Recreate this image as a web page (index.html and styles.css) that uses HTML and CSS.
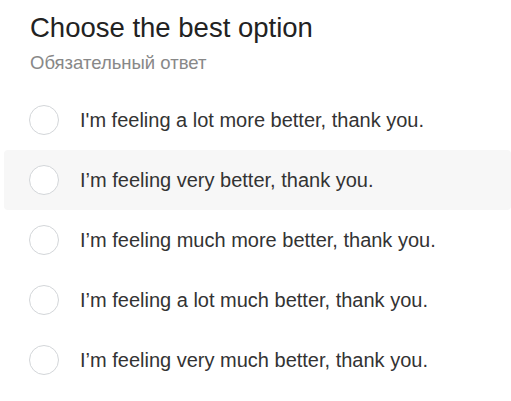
FILE: index.html
```html
<!DOCTYPE html>
<html>
<head>
<meta charset="utf-8">
<link rel="stylesheet" href="styles.css">
</head>
<body>
<div class="question">
  <h1 class="title">Choose the best option</h1>
  <div class="required">Обязательный ответ</div>
  <ul class="options">
    <li class="option"><span class="radio"></span><span class="label">I'm feeling a lot more better, thank you.</span></li>
    <li class="option hover"><span class="radio"></span><span class="label">I’m feeling very better, thank you.</span></li>
    <li class="option"><span class="radio"></span><span class="label">I’m feeling much more better, thank you.</span></li>
    <li class="option"><span class="radio"></span><span class="label">I’m feeling a lot much better, thank you.</span></li>
    <li class="option"><span class="radio"></span><span class="label">I’m feeling very much better, thank you.</span></li>
  </ul>
</div>
</body>
</html>
```
FILE: styles.css
```css
html, body {
  margin: 0;
  padding: 0;
  background: #ffffff;
  font-family: Arial, "Liberation Sans", sans-serif;
}
.question {
  padding-top: 12px;
}
.title {
  margin: 0 0 0 30px;
  font-size: 27.5px;
  line-height: 32px;
  font-weight: normal;
  color: #222222;
}
.required {
  margin: 8px 0 0 30px;
  font-size: 18.5px;
  line-height: 21px;
  color: #888888;
}
.options {
  list-style: none;
  margin: 17px 0 0 4px;
  padding: 0;
}
.option {
  display: flex;
  align-items: center;
  height: 60px;
  padding-left: 25px;
  gap: 21px;
  border-radius: 4px;
}
.option.hover {
  background: #f7f7f7;
}
.radio {
  flex: none;
  width: 28px;
  height: 28px;
  border: 1px solid #d3d6d9;
  border-radius: 50%;
  background: #ffffff;
}
.label {
  font-size: 20px;
  color: #333333;
}
```
